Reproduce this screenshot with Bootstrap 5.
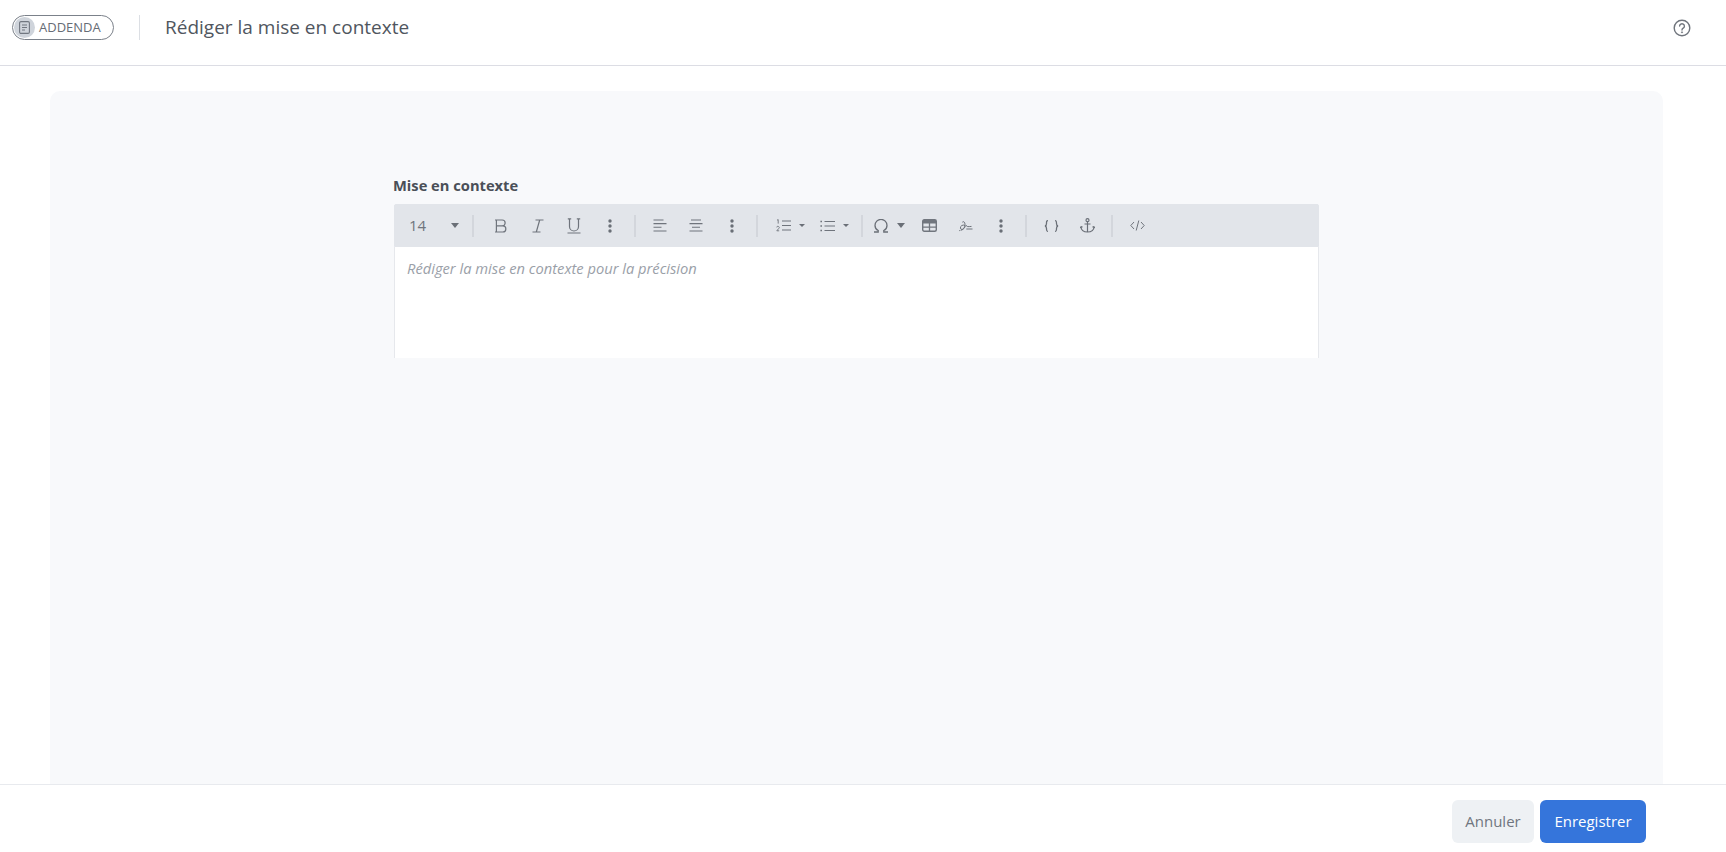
<!DOCTYPE html>
<html lang="fr">
<head>
<meta charset="utf-8">
<title>Rédiger la mise en contexte</title>
<link href="https://cdn.jsdelivr.net/npm/bootstrap@5.3.0/dist/css/bootstrap.min.css" rel="stylesheet">
<style>
html,body{height:100%;overflow:hidden}
body{font-family:"Open Sans","Noto Sans",sans-serif;color:#4a4f57;background:#fff}
.shell{height:852px}
.topbar{height:66px;border-bottom:1px solid #dcdde4;padding:0 35px 10px 12px}
.pill-tag{width:102px;height:25px;border:1px solid #7b818a;border-radius:13px;padding-left:1px;font-size:13px;font-weight:500;color:#666c75;line-height:1}
.pill-ico{width:21px;height:21px;border-radius:50%;background:#cfd4db;margin-right:4px}
.vr-line{width:1px;height:25px;background:#dcdfe4;margin:0 25px}
.page-title{font-size:19px;color:#50565e;font-weight:400;margin:0;line-height:27px}
.sheet{flex:1 1 auto;margin:25px 63px 0 50px;background:#f8f9fb;border-radius:10px 10px 0 0;padding-top:85px;min-height:0}
.editor-wrap{width:926px;margin-left:343px}
.field-label{font-size:14.7px;font-weight:700;color:#4a4f57;line-height:19px;margin-bottom:9px;display:block}
.tbar{height:43px;background:#e2e5ea;border:1px solid #e2e5ea;border-radius:2px 2px 0 0;margin-left:1px}
.tb{width:36px;height:34px;color:#70757d;flex:0 0 auto}
.tb-size{width:71px;height:34px;flex:0 0 auto;padding:0 7px 0 14px;font-size:15px;color:#70757d}
.tb-list{width:44px;height:34px;flex:0 0 auto;color:#70757d}
.tb-first{margin-left:4px}
.sep{width:2px;height:22px;background:#d3d6dc;margin:0 6px;flex:0 0 auto}
.sep-b{margin-right:10px}
.sep-c{margin:0 0 0 5px}
.ico-bold{margin-right:3px}
.caret-d{width:0;height:0;border-left:4.5px solid transparent;border-right:4.5px solid transparent;border-top:5px solid #6a6f77}
.caret-s{width:0;height:0;border-left:3px solid transparent;border-right:3px solid transparent;border-top:3.5px solid #6a6f77}
.ed-body{height:111px;background:#fff;border:solid #e6e8ec;border-width:0 1px;margin-left:1px;padding:12px 12px;font-size:14.7px;font-style:italic;color:#9aa0a8;line-height:19px}
.bottom{height:68px;border-top:1px solid #e8eaee;padding:15px 80px 0 0;background:#fff;gap:6px}
.btn-x{height:43px;font-size:15px;font-weight:500;border-radius:6px;border:0;padding:0;line-height:43px}
.btn-cancel{width:82px;background:#eef1f4;color:#70767f}
.btn-save{width:106px;background:#3575db;color:#fff}
</style>
</head>
<body>
<div class="shell d-flex flex-column">
  <header class="topbar d-flex align-items-center flex-shrink-0">
    <div class="pill-tag d-flex align-items-center">
      <span class="pill-ico d-flex align-items-center justify-content-center">
        <svg width="11" height="13" viewBox="0 0 11 13" fill="none" stroke="#717780" stroke-width="1.1"><rect x=".6" y=".6" width="9.8" height="11.8" rx="1.4"/><path d="M3 4h5M3 6.5h5M3 9h3"/></svg>
      </span>
      <span>ADDENDA</span>
    </div>
    <div class="vr-line"></div>
    <h1 class="page-title">Rédiger la mise en contexte</h1>
    <div class="ms-auto d-flex">
      <svg width="18" height="18" viewBox="0 0 18 18" fill="none" stroke="#6f747c" stroke-width="1.4"><circle cx="9" cy="9" r="7.8"/><path d="M6.6 7.1a2.4 2.4 0 1 1 3.6 2.1c-.8.5-1.2.9-1.2 1.8" stroke-linecap="round"/><circle cx="9" cy="13.3" r=".6" fill="#6f747c" stroke-width=".8"/></svg>
    </div>
  </header>

  <main class="sheet">
    <div class="editor-wrap">
      <label class="field-label">Mise en contexte</label>
      <div class="tbar d-flex align-items-center">
        <div class="tb-size d-flex align-items-center justify-content-between"><span>14</span><span class="caret-d"></span></div>
        <span class="sep sep-b"></span>
        <div class="tb d-flex align-items-center justify-content-center"><svg class="ico-bold" width="14" height="14" viewBox="0 0 14 14" fill="none" stroke="#6f747c" stroke-width="1.2"><path d="M1 1h7.2a2.9 2.9 0 0 1 0 5.9H2.2M2.2 6.9h6.6a3 3 0 0 1 0 6.1H1M2.4 1v12"/></svg></div>
        <div class="tb d-flex align-items-center justify-content-center"><svg width="14" height="14" viewBox="0 0 14 14" fill="none" stroke="#6f747c" stroke-width="1.2"><path d="M4.5 1h8M1.5 13h8M8.7 1 5.3 13"/></svg></div>
        <div class="tb d-flex align-items-center justify-content-center"><svg width="14" height="16" viewBox="0 0 14 16" fill="none" stroke="#6f747c" stroke-width="1.2"><path d="M2.5.8v7.7a4.5 4.5 0 0 0 9 0V.8M.8.8h3.4M9.8.8h3.4M.5 15h13"/></svg></div>
        <div class="tb d-flex align-items-center justify-content-center"><svg width="4" height="14" viewBox="0 0 4 14" fill="#6a6f77"><circle cx="2" cy="2" r="1.7"/><circle cx="2" cy="7" r="1.7"/><circle cx="2" cy="12" r="1.7"/></svg></div>
        <span class="sep"></span>
        <div class="tb d-flex align-items-center justify-content-center"><svg width="14" height="13" viewBox="0 0 14 13" fill="none" stroke="#6f747c" stroke-width="1.1"><path d="M.5 1h10M.5 4.6h13M.5 8.2h8M.5 12h13"/></svg></div>
        <div class="tb d-flex align-items-center justify-content-center"><svg width="14" height="13" viewBox="0 0 14 13" fill="none" stroke="#6f747c" stroke-width="1.1"><path d="M2 1h10M.5 4.6h13M3 8.2h8M.5 12h13"/></svg></div>
        <div class="tb d-flex align-items-center justify-content-center"><svg width="4" height="14" viewBox="0 0 4 14" fill="#6a6f77"><circle cx="2" cy="2" r="1.7"/><circle cx="2" cy="7" r="1.7"/><circle cx="2" cy="12" r="1.7"/></svg></div>
        <span class="sep"></span>
        <div class="tb-list tb-first d-flex align-items-center justify-content-center gap-2"><svg width="15" height="13" viewBox="0 0 15 13" fill="none" stroke="#6f747c"><path d="M6 2h9M6 6.5h9M6 11h9" stroke-width="1.1"/><path d="M1 1.2 2.200.6v4M.8 8.400a1.200 1.200 0 1 1 2 1L.8 11.800h2.400" stroke-width=".9"/></svg><span class="caret-s"></span></div>
        <div class="tb-list d-flex align-items-center justify-content-center gap-2"><svg width="15" height="12" viewBox="0 0 15 12" fill="none" stroke="#6f747c"><path d="M4.500 1.500H15M4.500 6H15M4.500 10.500H15" stroke-width="1.1"/><path d="M.4 1.500h1.600M.4 6h1.600M.4 10.500h1.600" stroke-width="1.5"/></svg><span class="caret-s"></span></div>
        <span class="sep sep-c"></span>
        <div class="tb-list d-flex align-items-center justify-content-center gap-1 ms-1"><svg width="16" height="14" viewBox="0 0 16 14" fill="none" stroke="#6a6f77" stroke-width="1.3"><path d="M1 13h4.200v-1.500A5.800 5.800 0 0 1 2 6.400a6 6 0 0 1 12 0 5.800 5.800 0 0 1-3.200 5.100V13H15"/></svg><span class="caret-d ms-1"></span></div>
        <div class="tb d-flex align-items-center justify-content-center"><svg width="15" height="13" viewBox="0 0 15 13"><rect x=".7" y=".7" width="13.6" height="11.6" rx="1.5" fill="none" stroke="#71767e" stroke-width="1.4"/><path d="M1 1h13v3.500H1z" fill="#71767e"/><path d="M1 8.200h13M7.500 4v8.500" stroke="#71767e" stroke-width="1.3"/></svg></div>
        <div class="tb d-flex align-items-center justify-content-center"><svg width="15" height="13" viewBox="0 0 15 13" fill="none" stroke="#6f747c" stroke-width="1"><path d="M1 11.600h.8M2.600 11.400C5.600 11 7 8 7 5.200 7 3 5.400 2 4.300 3.200M7 6.400c-2.200-1-4.800.4-4.600 2.700.2 1.800 2.600 1.800 4-.2.700-1 1-2 1.800-2.600.5 1.600 1.700 1.500 5.300 1.100M8.300 10h6.200"/></svg></div>
        <div class="tb d-flex align-items-center justify-content-center"><svg width="4" height="14" viewBox="0 0 4 14" fill="#6a6f77"><circle cx="2" cy="2" r="1.7"/><circle cx="2" cy="7" r="1.7"/><circle cx="2" cy="12" r="1.7"/></svg></div>
        <span class="sep"></span>
        <div class="tb d-flex align-items-center justify-content-center"><svg width="15" height="12" viewBox="0 0 15 12" fill="none" stroke="#6a6f77" stroke-width="1.3"><path d="M4 .7C2.500.7 2.500 1.500 2.500 3.500 2.500 5 2.300 5.700 1 6c1.300.3 1.500 1 1.500 2.500 0 2 0 2.800 1.500 2.800M11 .7c1.500 0 1.500.8 1.500 2.800 0 1.500.2 2.200 1.500 2.500-1.300.3-1.500 1-1.500 2.500 0 2 0 2.800-1.500 2.800"/></svg></div>
        <div class="tb d-flex align-items-center justify-content-center"><svg width="15" height="15" viewBox="0 0 15 15" fill="none" stroke="#6a6f77" stroke-width="1.2"><circle cx="7.5" cy="2.200" r="1.500"/><path d="M7.500 3.700V14M4.500 6h6M.8 8.500c.3 3.300 3 5.500 6.700 5.500s6.400-2.200 6.700-5.500M.8 8.500l-.3 1.700M.8 8.500l1.700.6M14.200 8.500l.3 1.700M14.200 8.500l-1.700.6"/></svg></div>
        <span class="sep"></span>
        <div class="tb d-flex align-items-center justify-content-center"><svg width="15" height="11" viewBox="0 0 15 11" fill="none" stroke="#6f747c" stroke-width="1"><path d="M4 2 .8 5.500 4 9M11 2l3.200 3.500L11 9M8.800.5 6.200 10.500"/></svg></div>
      </div>
      <div class="ed-body">Rédiger la mise en contexte pour la précision</div>
    </div>
  </main>

  <footer class="bottom d-flex justify-content-end flex-shrink-0">
    <button type="button" class="btn btn-x btn-cancel">Annuler</button>
    <button type="button" class="btn btn-x btn-save">Enregistrer</button>
  </footer>
</div>
</body>
</html>
